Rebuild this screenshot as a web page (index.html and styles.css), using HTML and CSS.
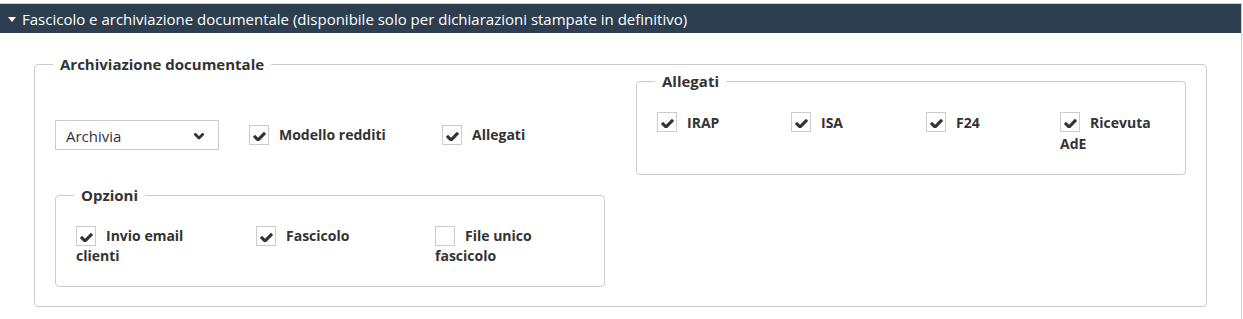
FILE: index.html
```html
<!DOCTYPE html>
<html lang="it">
<head>
<meta charset="utf-8">
<title>Fascicolo e archiviazione documentale</title>
<link rel="stylesheet" href="styles.css">
</head>
<body>
<div class="panel">
  <div class="panel-head">
    <span class="caret"></span>
    <span class="panel-title">Fascicolo e archiviazione documentale (disponibile solo per dichiarazioni stampate in definitivo)</span>
  </div>
  <div class="panel-body">
    <fieldset class="group outer">
      <legend>Archiviazione documentale</legend>
      <div class="split">
        <div class="left-col">
          <div class="top-row">
            <div class="select">
              <span>Archivia</span>
              <svg class="chev" width="10" height="7" viewBox="0 0 10 7"><path d="M1.4 1.4 L5 5 L8.6 1.4" fill="none" stroke="#333" stroke-width="2.8" stroke-linecap="round" stroke-linejoin="round"/></svg>
            </div>
            <label class="chk"><span class="box"><svg viewBox="121 330 1550 1100" width="13" height="9"><path d="M1671 566q0 40-28 68l-724 724-136 136q-28 28-68 28t-68-28l-136-136-362-362q-28-28-28-68t28-68l136-136q28-28 68-28t68 28l294 295 656-657q28-28 68-28t68 28l136 136q28 28 28 68z" fill="#333"/></svg></span>Modello redditi</label>
            <label class="chk"><span class="box"><svg viewBox="121 330 1550 1100" width="13" height="9"><path d="M1671 566q0 40-28 68l-724 724-136 136q-28 28-68 28t-68-28l-136-136-362-362q-28-28-28-68t28-68l136-136q28-28 68-28t68 28l294 295 656-657q28-28 68-28t68 28l136 136q28 28 28 68z" fill="#333"/></svg></span>Allegati</label>
          </div>
          <fieldset class="group opzioni">
            <legend>Opzioni</legend>
            <div class="grid3">
              <label class="chk"><span class="box"><svg viewBox="121 330 1550 1100" width="13" height="9"><path d="M1671 566q0 40-28 68l-724 724-136 136q-28 28-68 28t-68-28l-136-136-362-362q-28-28-28-68t28-68l136-136q28-28 68-28t68 28l294 295 656-657q28-28 68-28t68 28l136 136q28 28 28 68z" fill="#333"/></svg></span>Invio email clienti</label>
              <label class="chk"><span class="box"><svg viewBox="121 330 1550 1100" width="13" height="9"><path d="M1671 566q0 40-28 68l-724 724-136 136q-28 28-68 28t-68-28l-136-136-362-362q-28-28-28-68t28-68l136-136q28-28 68-28t68 28l294 295 656-657q28-28 68-28t68 28l136 136q28 28 28 68z" fill="#333"/></svg></span>Fascicolo</label>
              <label class="chk"><span class="box"></span>File unico fascicolo</label>
            </div>
          </fieldset>
        </div>
        <fieldset class="group allegati">
          <legend>Allegati</legend>
          <div class="grid4">
            <label class="chk"><span class="box"><svg viewBox="121 330 1550 1100" width="13" height="9"><path d="M1671 566q0 40-28 68l-724 724-136 136q-28 28-68 28t-68-28l-136-136-362-362q-28-28-28-68t28-68l136-136q28-28 68-28t68 28l294 295 656-657q28-28 68-28t68 28l136 136q28 28 28 68z" fill="#333"/></svg></span>IRAP</label>
            <label class="chk"><span class="box"><svg viewBox="121 330 1550 1100" width="13" height="9"><path d="M1671 566q0 40-28 68l-724 724-136 136q-28 28-68 28t-68-28l-136-136-362-362q-28-28-28-68t28-68l136-136q28-28 68-28t68 28l294 295 656-657q28-28 68-28t68 28l136 136q28 28 28 68z" fill="#333"/></svg></span>ISA</label>
            <label class="chk"><span class="box"><svg viewBox="121 330 1550 1100" width="13" height="9"><path d="M1671 566q0 40-28 68l-724 724-136 136q-28 28-68 28t-68-28l-136-136-362-362q-28-28-28-68t28-68l136-136q28-28 68-28t68 28l294 295 656-657q28-28 68-28t68 28l136 136q28 28 28 68z" fill="#333"/></svg></span>F24</label>
            <label class="chk"><span class="box"><svg viewBox="121 330 1550 1100" width="13" height="9"><path d="M1671 566q0 40-28 68l-724 724-136 136q-28 28-68 28t-68-28l-136-136-362-362q-28-28-28-68t28-68l136-136q28-28 68-28t68 28l294 295 656-657q28-28 68-28t68 28l136 136q28 28 28 68z" fill="#333"/></svg></span>Ricevuta AdE</label>
          </div>
        </fieldset>
      </div>
    </fieldset>
  </div>
</div>
</body>
</html>
```

FILE: styles.css
```css
* { box-sizing: border-box; }
html, body { margin: 0; padding: 0; background: #fff; }
body {
  font-family: "Open Sans", "Liberation Sans", sans-serif;
  color: #333;
  font-size: 14px;
}
.panel {
  margin-top: 3px;
  width: 1242px;
  height: 316px;
  border-top: 1px solid #cfcfcf;
  border-right: 1px solid #cfcfcf;
}
.panel-head {
  height: 29px;
  background: #2c3e50;
  color: #fff;
  display: flex;
  align-items: center;
  padding-left: 8px;
}
.caret {
  width: 0;
  height: 0;
  border-left: 4px solid transparent;
  border-right: 4px solid transparent;
  border-top: 5px solid #fff;
  margin-right: 6px;
  margin-top: 1px;
}
.panel-title {
  font-size: 15px;
  line-height: 20px;
}
.panel-body {
  padding: 21px 0 0 34px;
}
.group {
  margin: 0;
  border: 1px solid #ccc;
  border-radius: 4px;
  padding: 0 20px;
  min-width: 0;
}
.group > legend {
  font-weight: 700;
  font-size: 15px;
  line-height: 21px;
  padding: 0 7px;
  margin-left: -2px;
}
.outer {
  width: 1173px;
  padding-bottom: 19px;
}
.split {
  display: flex;
  align-items: flex-start;
  gap: 31px;
}
.left-col { width: 550px; }
.top-row {
  display: grid;
  grid-template-columns: 194px 193px 1fr;
  align-items: center;
  margin-top: 45px;
}
.select {
  width: 164px;
  height: 30px;
  border: 1px solid #ccc;
  display: flex;
  align-items: center;
  justify-content: space-between;
  padding: 2px 14px 0 10px;
  font-size: 15px;
}
.chev { margin-top: 1px; }
.chk {
  display: block;
  font-weight: 700;
  font-size: 14px;
  line-height: 20px;
}
.box {
  display: inline-flex;
  align-items: flex-end;
  justify-content: center;
  width: 20px;
  height: 20px;
  border: 1px solid #ccc;
  vertical-align: top;
  margin-right: 10px;
  padding-bottom: 3px;
}
.opzioni {
  margin-top: 35px;
  padding-bottom: 20px;
}
.grid3 {
  display: grid;
  grid-template-columns: 180px 179px 1fr;
  margin-top: 20px;
}
.grid3 .chk { max-width: 150px; }
.allegati {
  width: 550px;
  margin-top: -4px;
  padding-bottom: 20px;
}
.grid4 {
  display: grid;
  grid-template-columns: 134px 135px 134px 1fr;
  margin-top: 20px;
}
.grid4 .chk { max-width: 108px; line-height: 21px; }
```
